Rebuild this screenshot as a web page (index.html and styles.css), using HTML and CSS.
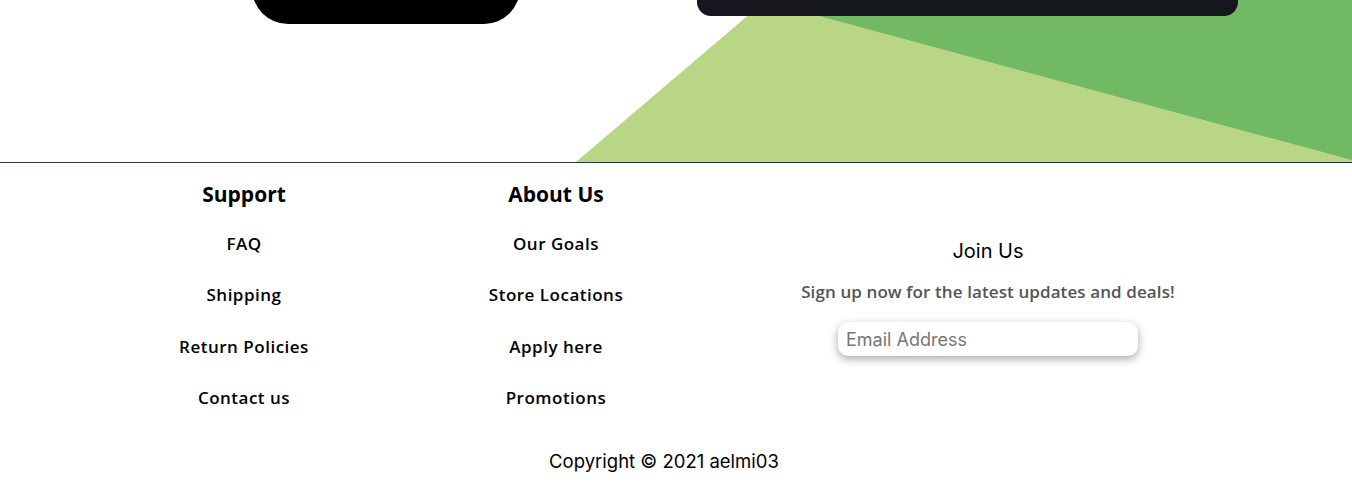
FILE: index.html
```html
<!DOCTYPE html>
<html lang="en">
<head>
<meta charset="utf-8">
<title>Footer</title>
<link rel="stylesheet" href="styles.css">
</head>
<body>
<section class="hero">
  <svg class="hero-bg" viewBox="0 0 1352 162" preserveAspectRatio="none" aria-hidden="true">
    <polygon points="766,0 1352,0 1352,162 576,162" fill="#b9d687"/>
    <polygon points="760,0 1352,0 1352,160" fill="#71ba63"/>
  </svg>
  <div class="hero-row">
    <a class="cta" href="#">Shop Now</a>
    <div class="card"></div>
  </div>
</section>
<footer class="footer">
  <div class="cols">
    <div class="col">
      <h3 class="col-title">Support</h3>
      <ul class="links">
        <li><a href="#">FAQ</a></li>
        <li><a href="#">Shipping</a></li>
        <li><a href="#">Return Policies</a></li>
        <li><a href="#">Contact us</a></li>
      </ul>
    </div>
    <div class="col">
      <h3 class="col-title">About Us</h3>
      <ul class="links">
        <li><a href="#">Our Goals</a></li>
        <li><a href="#">Store Locations</a></li>
        <li><a href="#">Apply here</a></li>
        <li><a href="#">Promotions</a></li>
      </ul>
    </div>
    <div class="col join">
      <h3 class="join-title">Join Us</h3>
      <p class="join-text">Sign up now for the latest updates and deals!</p>
      <input class="email" type="email" placeholder="Email Address">
    </div>
  </div>
  <p class="copy">Copyright © 2021 aelmi03</p>
</footer>
</body>
</html>
```

FILE: styles.css
```css
* { box-sizing: border-box; }
html, body { margin: 0; padding: 0; background: #fff; }
body { width: 1352px; height: 482px; overflow: hidden; }

.hero {
  position: relative;
  height: 162px;
}
.hero-bg {
  position: absolute;
  left: 0; top: 0;
  width: 100%; height: 100%;
  display: block;
}
.hero-row {
  position: relative;
  display: flex;
  align-items: flex-start;
  padding-left: 252px;
  gap: 177px;
}
.cta {
  display: flex;
  align-items: center;
  justify-content: center;
  width: 268px;
  height: 80px;
  margin-top: -56px;
  padding-bottom: 23px;
  border-radius: 36px;
  background: #000;
  color: #fff;
  font: 700 40px "Open Sans", sans-serif;
  white-space: nowrap;
  text-decoration: none;
  overflow: hidden;
}
.card {
  width: 541px;
  height: 300px;
  margin-top: -284px;
  border-radius: 14px;
  background: linear-gradient(180deg, #1c1c24, #15161e);
}

.footer {
  border-top: 1px solid #2d3a3a;
}
.cols {
  display: grid;
  grid-template-columns: 312px 312px 1fr;
  padding: 19px 88px 0;
}
.col {
  display: flex;
  flex-direction: column;
  align-items: center;
}
.col-title {
  margin: 0;
  font: 700 21px/24px "Open Sans", sans-serif;
  color: #000;
}
.links {
  list-style: none;
  margin: 28px 0 0;
  padding: 0;
  display: flex;
  flex-direction: column;
  align-items: center;
  gap: 31.4px;
}
.links a {
  display: block;
  font: 600 17px/20px "Open Sans", sans-serif;
  letter-spacing: 0.5px;
  color: #000;
  text-decoration: none;
}
.join-title {
  margin: 55px 0 0;
  font: 400 20px/28px "Inter", sans-serif;
  color: #000;
}
.join-text {
  margin: 17px 0 0;
  font: 600 17px/20px "Open Sans", sans-serif;
  letter-spacing: 0.1px;
  color: #555;
}
.email {
  margin-top: 20px;
  width: 300px;
  height: 34px;
  border: none;
  border-radius: 10px;
  padding: 0 8px;
  background: #fff;
  box-shadow: 0 3px 8px rgba(0, 0, 0, 0.35);
  font: 400 18px "Inter", sans-serif;
  color: #333;
  outline: none;
}
.email::placeholder { color: #777; }
.copy {
  margin: 40px 0 0;
  padding-right: 24px;
  text-align: center;
  font: 400 18.5px/27px "Inter", sans-serif;
  color: #000;
}
```
